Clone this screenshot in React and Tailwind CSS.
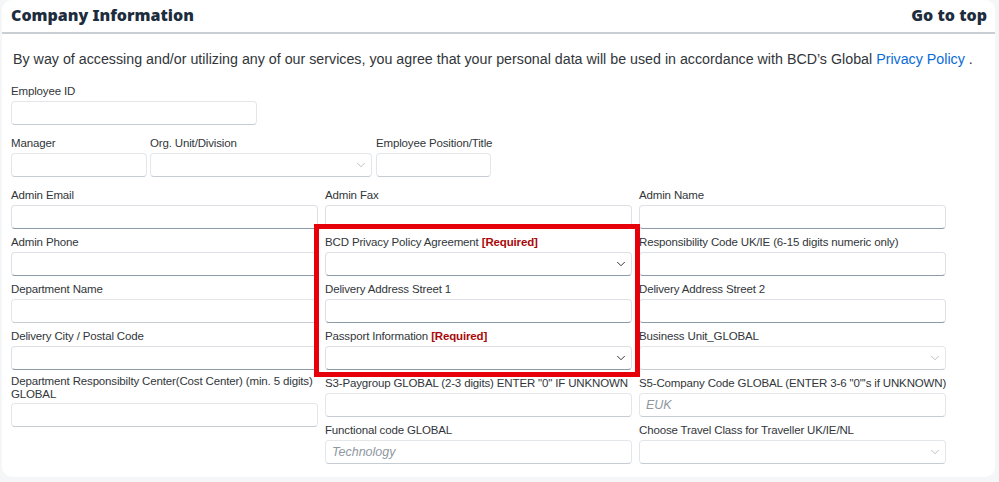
import { ChevronDown } from "lucide-react";

const font = { fontFamily: '"Liberation Sans", Arial, sans-serif' };
const headFont = { fontFamily: '"Noto Sans", "Open Sans", sans-serif' };

function Label({ children, req, two }) {
  return (
    <div
      className={
        "text-[11.5px] tracking-[-0.15px] text-[#32363a] pb-[2px] whitespace-nowrap " +
        (two ? "leading-[13px]" : "leading-[16px]")
      }
    >
      {children}
      {req && <span className="font-bold text-[#aa0808]"> [Required]</span>}
    </div>
  );
}

function Box({ select, dark, placeholder, className = "" }) {
  return (
    <div
      className={
        "h-[24px] bg-white rounded-[4px] border flex items-center justify-between pl-[6px] pr-[3px] " +
        (dark
          ? "border-[#dde1e5] border-b-[#8d9aa7] "
          : "border-[#e4e7ea] border-b-[#c5ccd3] ") +
        className
      }
    >
      <span className="text-[12.5px] italic text-[#8f979f]">{placeholder}</span>
      {select && (
        <ChevronDown
          className={"w-[14px] h-[14px] " + (dark ? "text-[#32363a]" : "text-[#a8b0b8]")}
          strokeWidth={dark ? 1.7 : 1.4}
        />
      )}
    </div>
  );
}

function Field({ label, req, two, select, dark, placeholder }) {
  return (
    <div className="mb-[5px]">
      <Label req={req} two={two}>
        {label}
      </Label>
      <Box select={select} dark={dark} placeholder={placeholder} />
    </div>
  );
}

export default function App() {
  return (
    <div className="w-[999px] h-[482px] bg-[#f5f6f7] px-[2px] overflow-hidden" style={font}>
      <div className="relative h-[477px] bg-white rounded-[10px] mr-[2px]">
        {/* Header */}
        <div
          className="h-[34px] flex items-center justify-between pl-[9px] pr-[8px] pb-[3px] border-b-2 border-[#c9ced3]"
          style={headFont}
        >
          <h2 className="text-[16px] font-black text-[#1d2d3e]">Company Information</h2>
          <a className="text-[16px] font-black text-[#1d2d3e]">Go to top</a>
        </div>

        <div className="px-[9px]">
          <p className="pl-[2px] mt-[15px] text-[14.25px] leading-[20px] text-[#32363a] whitespace-nowrap">
            By way of accessing and/or utilizing any of our services, you agree that your personal
            data will be used in accordance with BCD’s Global{" "}
            <span className="text-[#0b6bd6]">Privacy Policy</span> .
          </p>

          <div className="mt-[14px] w-[246px]">
            <Label>Employee ID</Label>
            <Box />
          </div>

          <div className="mt-[10px] flex gap-[3px]">
            <div className="w-[136px]">
              <Label>Manager</Label>
              <Box />
            </div>
            <div className="w-[222px]">
              <Label>Org. Unit/Division</Label>
              <Box select />
            </div>
            <div className="w-[115px] ml-[1px]">
              <Label>Employee Position/Title</Label>
              <Box />
            </div>
          </div>

          <div className="mt-[10px] flex gap-[7px]">
            <div className="w-[307px]">
              <Field label="Admin Email" dark />
              <Field label="Admin Phone" dark />
              <Field label="Department Name" />
              <Field label="Delivery City / Postal Code" dark />
              <Field
                two
                label={
                  <>
                    Department Responsibilty Center(Cost Center) (min. 5 digits)
                    <br />
                    GLOBAL
                  </>
                }
              />
            </div>
            <div className="w-[307px]">
              <Field label="Admin Fax" dark />
              <Field label="BCD Privacy Policy Agreement" req select dark />
              <Field label="Delivery Address Street 1" dark />
              <Field label="Passport Information" req select dark />
              <Field label={'S3-Paygroup GLOBAL (2-3 digits) ENTER "0" IF UNKNOWN'} />
              <Field label="Functional code GLOBAL" placeholder="Technology" />
            </div>
            <div className="w-[307px]">
              <Field label="Admin Name" dark />
              <Field label="Responsibility Code UK/IE (6-15 digits numeric only)" dark />
              <Field label="Delivery Address Street 2" dark />
              <Field label="Business Unit_GLOBAL" select />
              <Field label={'S5-Company Code GLOBAL (ENTER 3-6 "0"\'s if UNKNOWN)'} placeholder="EUK" />
              <Field label="Choose Travel Class for Traveller UK/IE/NL" select />
            </div>
          </div>
        </div>

        {/* Highlight annotation */}
        <div className="absolute left-[312px] top-[224px] w-[326px] h-[153px] border-[5px] border-[#e6000a] pointer-events-none" />
      </div>
    </div>
  );
}
